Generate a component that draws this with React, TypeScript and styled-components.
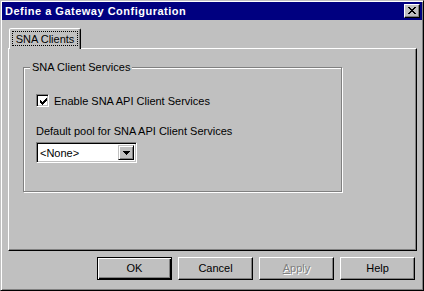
import styled, { createGlobalStyle } from "styled-components";

const GlobalStyle = createGlobalStyle`
  html, body {
    margin: 0;
    padding: 0;
    background: #c0c0c0;
  }
  body {
    font-family: "Liberation Sans", Arial, sans-serif;
    font-size: 11px;
    color: #000000;
  }
`;

const Window = styled.div`
  width: 424px;
  height: 291px;
  box-sizing: border-box;
  display: flex;
  flex-direction: column;

  padding: 1px;
  background: #c0c0c0;
  border: 1px solid;
  border-color: #c0c0c0 #000000 #000000 #c0c0c0;
  box-shadow: inset 1px 1px 0 #ffffff, inset -1px -1px 0 #808080;
`;

const TitleBar = styled.div`
  height: 18px;
  flex: none;

  display: flex;
  align-items: center;
  justify-content: space-between;

  padding: 0 2px 0 3px;
  background: #000080;
  color: #ffffff;
  font-weight: bold;
  font-size: 11px;
  letter-spacing: 0.5px;
`;

const CloseButton = styled.div`
  width: 16px;
  height: 14px;
  box-sizing: border-box;

  display: flex;
  align-items: center;
  justify-content: center;

  background: #c0c0c0;
  border: 1px solid;
  border-color: #ffffff #000000 #000000 #ffffff;
  box-shadow: inset -1px -1px 0 #808080;
  padding: 0 1px 1px 0;
`;

const Body = styled.div`
  flex: 1;
  display: flex;
  flex-direction: column;
  padding: 8px 5px 7px 6px;
`;

const TabStrip = styled.div`
  height: 20px;
  display: flex;
  align-items: flex-end;
  padding-left: 1px;
`;

const Tab = styled.div`
  position: relative;
  z-index: 1;
  width: 72px;
  height: 21px;
  margin-bottom: -1px;
  box-sizing: border-box;

  display: flex;
  align-items: center;
  justify-content: center;

  background: #c0c0c0;
  border: 1px solid;
  border-bottom: none;
  border-color: #ffffff #000000 transparent #ffffff;
  border-radius: 2px 2px 0 0;
  box-shadow: inset -1px 0 0 #808080;
  padding-bottom: 1px;
`;

const TabLabel = styled.span`
  display: flex;
  align-items: center;
  width: 66px;
  height: 15px;
  box-sizing: border-box;
  justify-content: center;
  outline: 1px dotted #000000;
  outline-offset: -1px;
`;

const Panel = styled.div`
  height: 203px;
  box-sizing: border-box;

  border: 1px solid;
  border-color: #ffffff #000000 #000000 #ffffff;
  box-shadow: inset -1px -1px 0 #808080;

  padding: 18px 0 0 14px;
`;

const GroupBox = styled.div`
  position: relative;
  width: 319px;
  height: 125px;
  box-sizing: border-box;

  display: flex;
  flex-direction: column;
  align-items: flex-start;

  border: 1px solid #808080;
  box-shadow: inset 1px 1px 0 #ffffff, 1px 1px 0 #ffffff;
  padding: 26px 0 0 12px;
`;

const GroupCaption = styled.span`
  position: absolute;
  top: -7px;
  left: 6px;
  padding: 0 2px;
  line-height: 13px;
  background: #c0c0c0;
`;

const CheckRow = styled.label`
  display: flex;
  align-items: center;
  gap: 5px;
  height: 13px;
`;

const CheckBox = styled.span`
  width: 13px;
  height: 13px;
  box-sizing: border-box;

  display: flex;
  align-items: center;
  justify-content: center;

  background: #ffffff;
  border: 1px solid;
  border-color: #808080 #ffffff #ffffff #808080;
  box-shadow: inset 1px 1px 0 #000000, inset -1px -1px 0 #c0c0c0;
  padding: 1px 0 0 1px;
`;

const FieldLabel = styled.div`
  margin-top: 18px;
  line-height: 13px;
`;

const Combo = styled.div`
  width: 101px;
  height: 21px;
  margin-top: 4px;
  box-sizing: border-box;

  display: flex;
  align-items: stretch;

  background: #ffffff;
  border: 1px solid;
  border-color: #808080 #ffffff #ffffff #808080;
  box-shadow: inset 1px 1px 0 #000000, inset -1px -1px 0 #c0c0c0;
  padding: 2px;
`;

const ComboText = styled.span`
  flex: 1;
  display: flex;
  align-items: center;
  padding-left: 1px;
`;

const ComboArrow = styled.span`
  width: 16px;
  box-sizing: border-box;

  display: flex;
  align-items: center;
  justify-content: center;

  background: #c0c0c0;
  border: 1px solid;
  border-color: #c0c0c0 #000000 #000000 #c0c0c0;
  box-shadow: inset 1px 1px 0 #ffffff, inset -1px -1px 0 #808080;
`;

const ButtonRow = styled.div`
  display: flex;
  justify-content: flex-end;
  gap: 6px;
  margin-top: 6px;
  padding-right: 2px;
`;

const Button = styled.div<{ $default?: boolean; $disabled?: boolean }>`
  width: 75px;
  height: 23px;
  box-sizing: border-box;

  display: flex;
  align-items: center;
  justify-content: center;

  background: #c0c0c0;
  border: 1px solid;
  border-color: ${(p) =>
    p.$default ? "#000000" : "#ffffff #000000 #000000 #ffffff"};
  box-shadow: ${(p) =>
    p.$default
      ? "inset 1px 1px 0 #ffffff, inset -1px -1px 0 #000000, inset -2px -2px 0 #808080"
      : "inset -1px -1px 0 #808080"};
  color: ${(p) => (p.$disabled ? "#808080" : "#000000")};
  text-shadow: ${(p) => (p.$disabled ? "1px 1px 0 #ffffff" : "none")};
  padding-bottom: 1px;

  u {
    text-decoration: underline;
  }
`;

function CloseGlyph() {
  return (
    <svg width="8" height="7" viewBox="0 0 8 7" shapeRendering="crispEdges">
      <path
        d="M0 0h2v1h-2zM6 0h2v1h-2zM1 1h2v1h-2zM5 1h2v1h-2zM2 2h4v1h-4zM3 3h2v1h-2zM2 4h4v1h-4zM1 5h2v1h-2zM5 5h2v1h-2zM0 6h2v1h-2zM6 6h2v1h-2z"
        fill="#000000"
      />
    </svg>
  );
}

function CheckGlyph() {
  return (
    <svg width="7" height="7" viewBox="0 0 7 7" shapeRendering="crispEdges">
      <path
        d="M6 0h1v1h-1zM5 1h2v1h-2zM0 2h1v1h-1zM4 2h3v1h-3zM0 3h2v1h-2zM3 3h3v1h-3zM0 4h5v1h-5zM1 5h3v1h-3zM2 6h1v1h-1z"
        fill="#000000"
      />
    </svg>
  );
}

function ArrowGlyph() {
  return (
    <svg width="7" height="4" viewBox="0 0 7 4" shapeRendering="crispEdges">
      <path d="M0 0h7v1h-7zM1 1h5v1h-5zM2 2h3v1h-3zM3 3h1v1h-1z" fill="#000000" />
    </svg>
  );
}

export default function App() {
  return (
    <>
      <GlobalStyle />
      <Window>
        <TitleBar>
          <span>Define a Gateway Configuration</span>
          <CloseButton>
            <CloseGlyph />
          </CloseButton>
        </TitleBar>
        <Body>
          <TabStrip>
            <Tab>
              <TabLabel>SNA Clients</TabLabel>
            </Tab>
          </TabStrip>
          <Panel>
            <GroupBox>
              <GroupCaption>SNA Client Services</GroupCaption>
              <CheckRow>
                <CheckBox>
                  <CheckGlyph />
                </CheckBox>
                Enable SNA API Client Services
              </CheckRow>
              <FieldLabel>Default pool for SNA API Client Services</FieldLabel>
              <Combo>
                <ComboText>&lt;None&gt;</ComboText>
                <ComboArrow>
                  <ArrowGlyph />
                </ComboArrow>
              </Combo>
            </GroupBox>
          </Panel>
          <ButtonRow>
            <Button $default>OK</Button>
            <Button>Cancel</Button>
            <Button $disabled>
              <span>
                <u>A</u>pply
              </span>
            </Button>
            <Button>Help</Button>
          </ButtonRow>
        </Body>
      </Window>
    </>
  );
}
